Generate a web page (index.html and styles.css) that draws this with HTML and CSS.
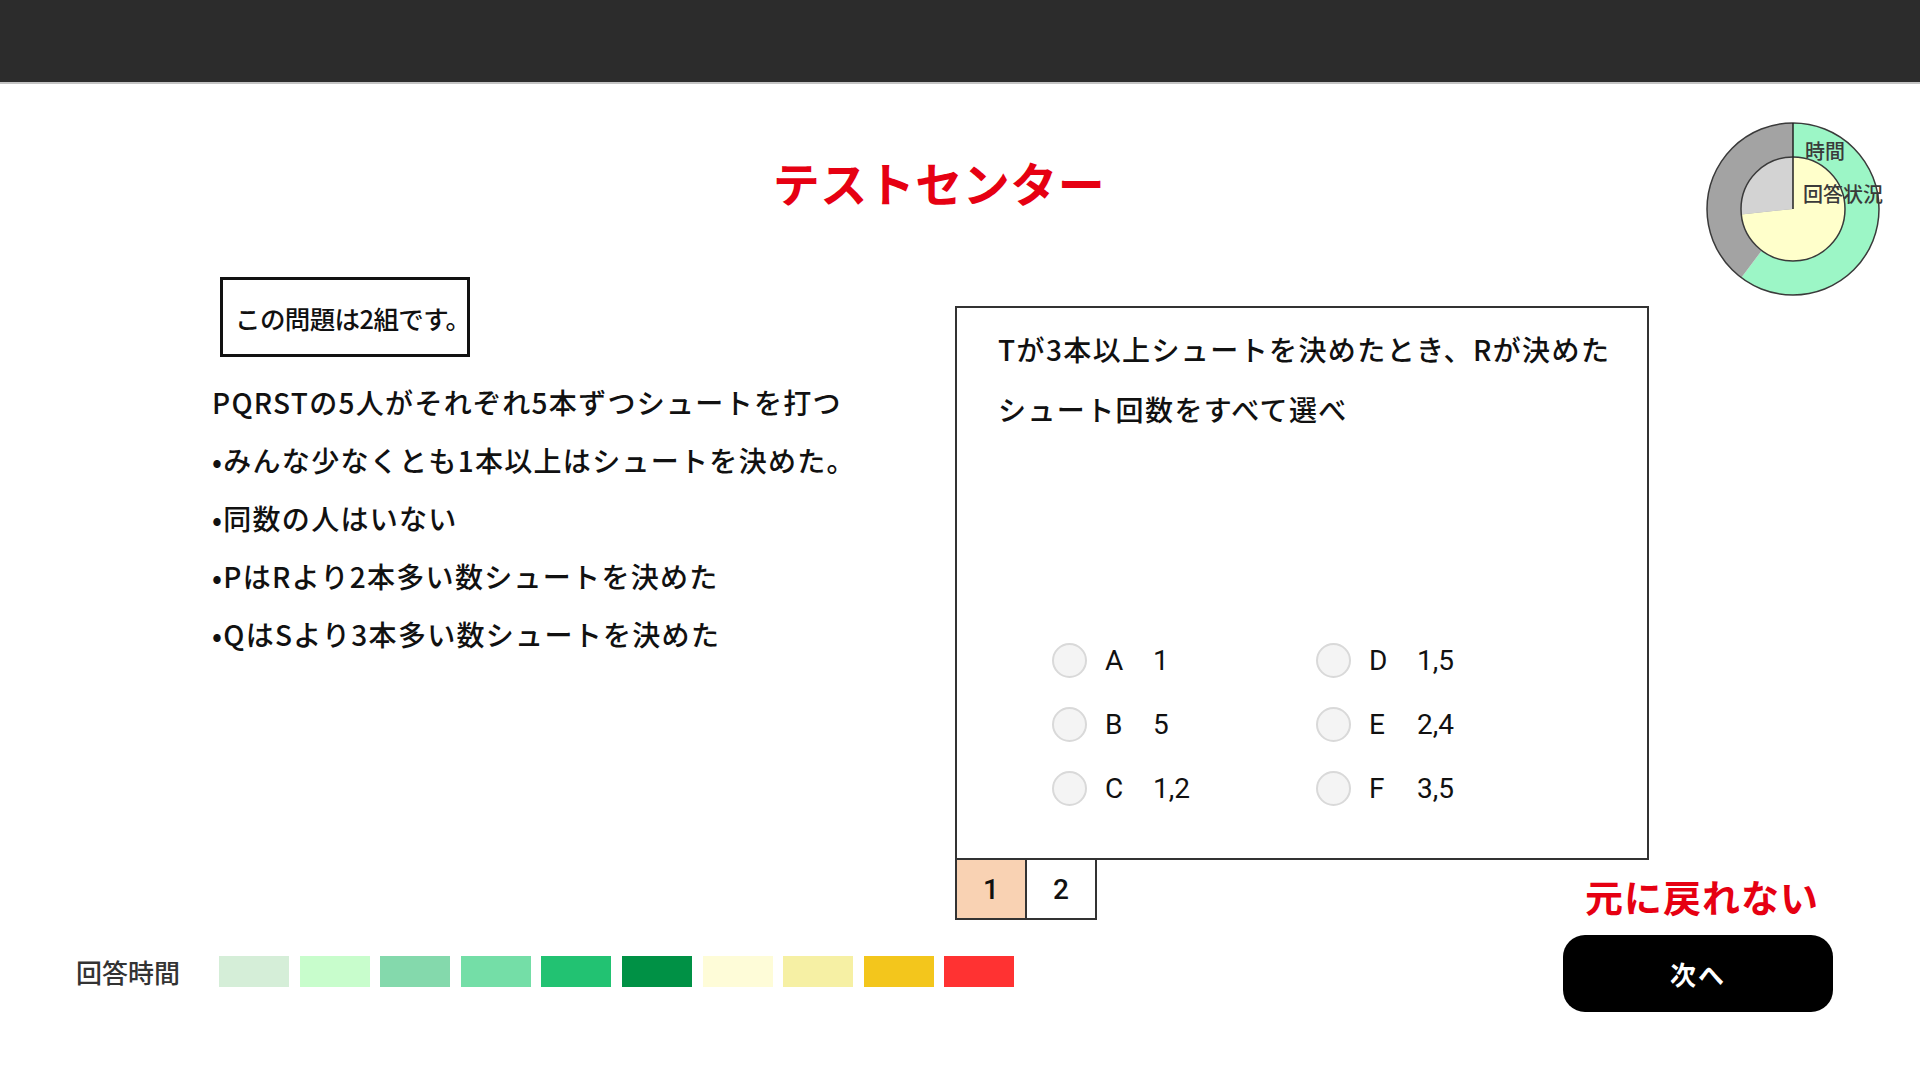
FILE: index.html
```html
<!DOCTYPE html>
<html lang="ja">
<head>
<meta charset="utf-8">
<title>テストセンター</title>
<link rel="stylesheet" href="styles.css">
</head>
<body>
<header class="topbar"></header>
<div class="content">
  <div class="donut">
    <svg width="176" height="176" viewBox="0 0 176 176" class="donut-svg">
      <path d="M88,88 L88,2 A86,86 0 1,1 36.25,156.68 Z" fill="#9cf6c6"/>
      <path d="M88,88 L36.25,156.68 A86,86 0 0,1 88,2 Z" fill="#a3a3a3"/>
      <circle cx="88" cy="88" r="86" fill="none" stroke="#3a3a3a" stroke-width="1.5"/>
      <path d="M88,88 L88,36 A52,52 0 1,1 36.3,93.4 Z" fill="#ffffcb"/>
      <path d="M88,88 L36.3,93.4 A52,52 0 0,1 88,36 Z" fill="#d3d3d3"/>
      <circle cx="88" cy="88" r="52" fill="none" stroke="#3a3a3a" stroke-width="1.5"/>
      <line x1="88" y1="2" x2="88" y2="88" stroke="#222" stroke-width="1.5"/>
      <text x="100" y="38" class="donut-label">時間</text>
      <text x="98" y="81" class="donut-label">回答状況</text>
    </svg>
  </div>

  <h1 class="title">テストセンター</h1>

  <div class="main">
    <section class="left">
      <div class="group-box">この問題は2組です。</div>
      <div class="premise">
        <p>PQRSTの5人がそれぞれ5本ずつシュートを打つ</p>
        <p>•みんな少なくとも1本以上はシュートを決めた。</p>
        <p>•同数の人はいない</p>
        <p>•PはRより2本多い数シュートを決めた</p>
        <p>•QはSより3本多い数シュートを決めた</p>
      </div>
    </section>

    <section class="right">
      <div class="qbox">
        <p class="question">Tが3本以上シュートを決めたとき、Rが決めた<br>シュート回数をすべて選べ</p>
        <div class="options">
          <label class="opt"><span class="radio"></span><span class="letter">A</span><span class="val">1</span></label>
          <label class="opt"><span class="radio"></span><span class="letter">D</span><span class="val">1,5</span></label>
          <label class="opt"><span class="radio"></span><span class="letter">B</span><span class="val">5</span></label>
          <label class="opt"><span class="radio"></span><span class="letter">E</span><span class="val">2,4</span></label>
          <label class="opt"><span class="radio"></span><span class="letter">C</span><span class="val">1,2</span></label>
          <label class="opt"><span class="radio"></span><span class="letter">F</span><span class="val">3,5</span></label>
        </div>
      </div>
      <div class="tabrow">
        <div class="tabs">
          <div class="tab active">1</div>
          <div class="tab">2</div>
        </div>
        <div class="warn">元に戻れない</div>
      </div>
    </section>
  </div>

  <footer class="footer">
    <div class="legend">
      <span class="legend-label">回答時間</span>
      <div class="swatches">
        <span class="sw c1"></span>
        <span class="sw c2"></span>
        <span class="sw c3"></span>
        <span class="sw c4"></span>
        <span class="sw c5"></span>
        <span class="sw c6"></span>
        <span class="sw c7"></span>
        <span class="sw c8"></span>
        <span class="sw c9"></span>
        <span class="sw c10"></span>
      </div>
    </div>
    <button class="next">次へ</button>
  </footer>
</div>
</body>
</html>
```

FILE: styles.css
```css
* { box-sizing: border-box; }

html, body {
  margin: 0;
  padding: 0;
  background: #ffffff;
}

body {
  width: 1920px;
  height: 1080px;
  overflow: hidden;
  font-family: "Noto Sans CJK JP", "Noto Sans", sans-serif;
  color: #111;
}

.topbar {
  height: 84px;
  background: #2c2c2c;
  border-bottom: 2px solid #c4c4c4;
}

.content {
  position: relative;
  padding-top: 70px;
}

.donut {
  position: absolute;
  top: 37px;
  right: 39px;
  width: 176px;
  height: 176px;
}

.donut-svg {
  overflow: visible;
  display: block;
}

.donut-label {
  font-family: "Noto Sans CJK JP", sans-serif;
  font-size: 20px;
  font-weight: 500;
  fill: #3a3a3a;
}

.title {
  margin: 0 0 67px;
  padding-right: 42px;
  text-align: center;
  font-size: 47px;
  line-height: 56px;
  font-weight: 700;
  color: #e60012;
  letter-spacing: 0.5px;
}

.main {
  display: flex;
  align-items: flex-start;
  padding-left: 212px;
}

.left {
  width: 743px;
  flex: none;
}

.group-box {
  width: 250px;
  height: 80px;
  margin-left: 8px;
  border: 3px solid #111;
  display: flex;
  align-items: center;
  padding-left: 12px;
  font-size: 25.5px;
  font-weight: 500;
  letter-spacing: -0.6px;
  white-space: nowrap;
}

.premise {
  margin-top: 16px;
}

.premise p {
  margin: 0;
  font-size: 28px;
  line-height: 58px;
  font-weight: 500;
  letter-spacing: 1.3px;
  white-space: nowrap;
}

.right {
  width: 878px;
  flex: none;
  margin-top: 29px;
}

.qbox {
  width: 694px;
  height: 554px;
  border: 2px solid #333;
  padding: 11px 20px 38px 41px;
  display: flex;
  flex-direction: column;
  background: #fff;
}

.question {
  margin: 0;
  font-size: 28px;
  line-height: 60px;
  font-weight: 500;
  letter-spacing: 1.4px;
  white-space: nowrap;
}

.options {
  margin-top: auto;
  margin-left: 54px;
  display: grid;
  grid-template-columns: 264px 264px;
  grid-auto-rows: 64px;
}

.opt {
  display: flex;
  align-items: center;
  font-family: Roboto, "Liberation Sans", sans-serif;
  font-size: 28px;
  color: #111;
}

.radio {
  width: 35px;
  height: 35px;
  border-radius: 50%;
  border: 2px solid #d9d9d9;
  background: #f4f4f4;
  flex: none;
}

.letter {
  width: 48px;
  margin-left: 18px;
}

.tabrow {
  display: flex;
  align-items: flex-end;
  height: 60px;
}

.tabs {
  display: flex;
  margin-top: -2px;
}

.tab {
  width: 72px;
  height: 62px;
  border: 2px solid #333;
  display: flex;
  align-items: center;
  justify-content: center;
  font-family: Roboto, "Liberation Sans", sans-serif;
  font-size: 28px;
  font-weight: 500;
  color: #111;
  background: #fff;
}

.tab + .tab {
  margin-left: -2px;
}

.tab.active {
  background: #f9d2b3;
}

.warn {
  margin-left: auto;
  margin-right: 14px;
  font-size: 38px;
  line-height: 48px;
  font-weight: 700;
  color: #e60012;
  letter-spacing: 1px;
}

.footer {
  display: flex;
  align-items: center;
  padding: 15px 87px 0 76px;
}

.legend {
  display: flex;
  align-items: center;
  margin-top: -4px;
}

.legend-label {
  width: 143px;
  font-size: 26px;
  font-weight: 500;
  color: #333;
}

.swatches {
  display: flex;
  gap: 10.6px;
}

.sw {
  width: 70px;
  height: 31px;
  display: block;
}

.c1 { background: #d5eed8; }
.c2 { background: #c8fdcc; }
.c3 { background: #84d9ac; }
.c4 { background: #74dea7; }
.c5 { background: #22c272; }
.c6 { background: #009145; }
.c7 { background: #fefcd8; }
.c8 { background: #f6f0a4; }
.c9 { background: #f3c61c; }
.c10 { background: #ff3232; }

.next {
  margin-left: auto;
  width: 270px;
  height: 77px;
  border: none;
  border-radius: 22px;
  background: #000;
  color: #fff;
  font-family: "Noto Sans CJK JP", sans-serif;
  font-size: 26px;
  font-weight: 700;
  letter-spacing: 2px;
}
```
